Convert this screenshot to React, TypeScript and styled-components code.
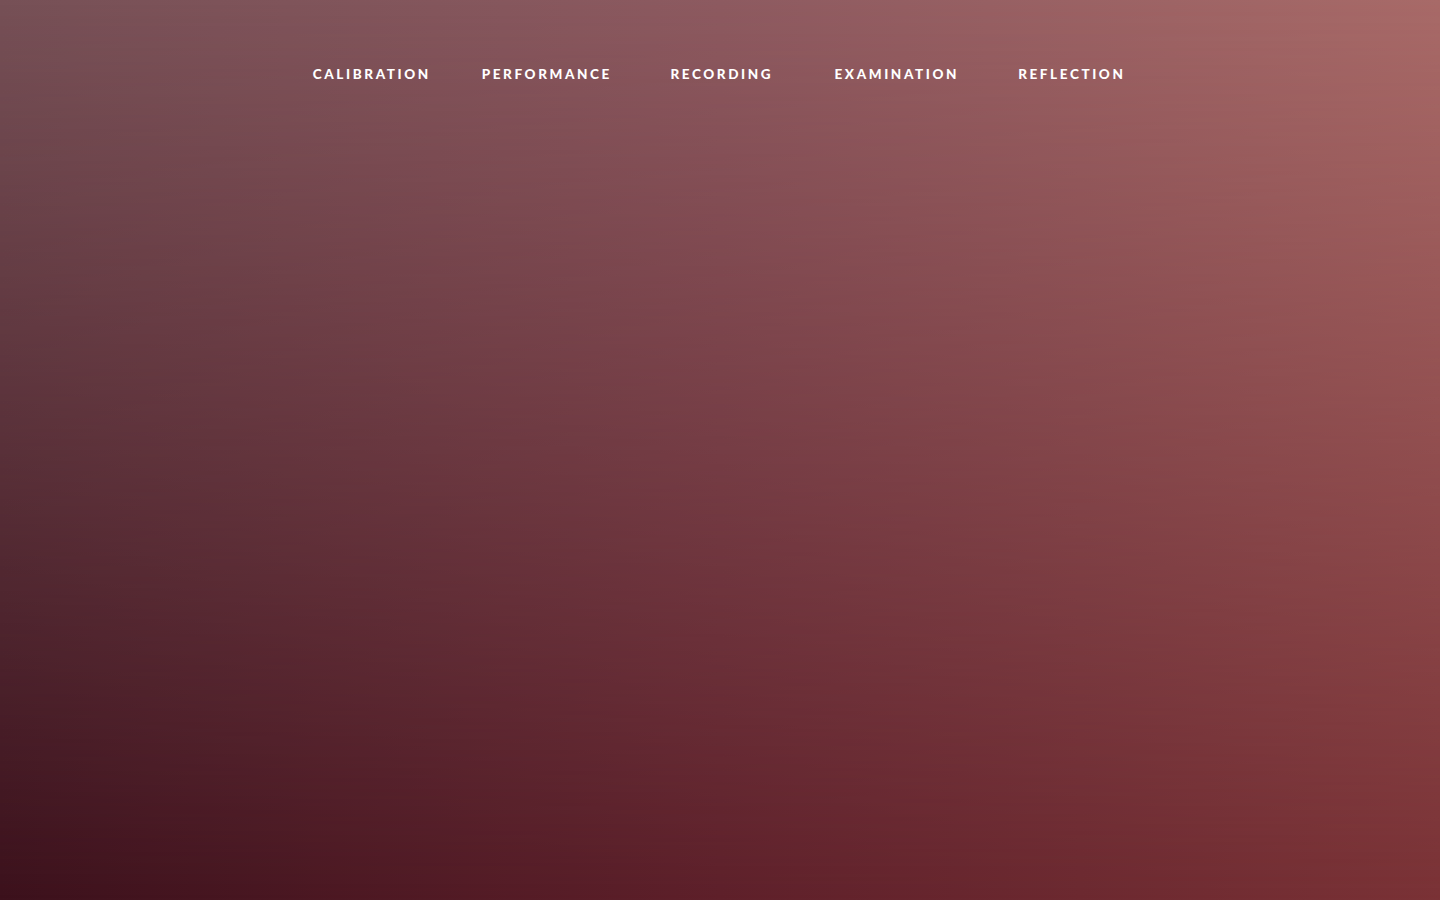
import React from "react";
import styled, { createGlobalStyle } from "styled-components";

const GlobalStyle = createGlobalStyle`
  html, body {
    margin: 0;
    padding: 0;
    height: 100%;
  }
  body {
    font-family: Lato, "Liberation Sans", sans-serif;
  }
  #root {
    height: 100%;
  }
`;

const Page = styled.div`
  position: relative;
  width: 100%;
  height: 100vh;
  overflow: hidden;
  background: linear-gradient(
    to right,
    rgb(60, 17, 28) 0%,
    rgb(94, 32, 42) 50%,
    rgb(122, 50, 54) 100%
  );

  &::before {
    content: "";
    position: absolute;
    inset: 0;
    background: linear-gradient(
      to right,
      rgb(118, 80, 86) 0%,
      rgb(141, 90, 96) 50%,
      rgb(168, 106, 104) 100%
    );
    -webkit-mask-image: linear-gradient(to bottom, #000 0%, rgba(0, 0, 0, 0) 100%);
    mask-image: linear-gradient(to bottom, #000 0%, rgba(0, 0, 0, 0) 100%);
  }
`;

const Nav = styled.nav`
  position: relative;
  z-index: 1;
  display: flex;
  justify-content: center;
  padding-top: 63px;
`;

const NavList = styled.ul`
  display: grid;
  grid-template-columns: repeat(5, 175px);
  margin: 0;
  padding: 0 0 0 1px;
  list-style: none;
`;

const NavItem = styled.li`
  text-align: center;
`;

const NavLink = styled.a`
  display: inline-block;
  color: #ffffff;
  text-decoration: none;
  font-family: Lato, "Liberation Sans", sans-serif;
  font-weight: 900;
  font-size: 13.5px;
  line-height: 20px;
  letter-spacing: 2.6px;
  text-transform: uppercase;
  padding-left: 2.6px;
`;

const items = ["Calibration", "Performance", "Recording", "Examination", "Reflection"];

export default function App() {
  return (
    <>
      <GlobalStyle />
      <Page>
        <Nav>
          <NavList>
            {items.map((label) => (
              <NavItem key={label}>
                <NavLink href="#">{label}</NavLink>
              </NavItem>
            ))}
          </NavList>
        </Nav>
      </Page>
    </>
  );
}
